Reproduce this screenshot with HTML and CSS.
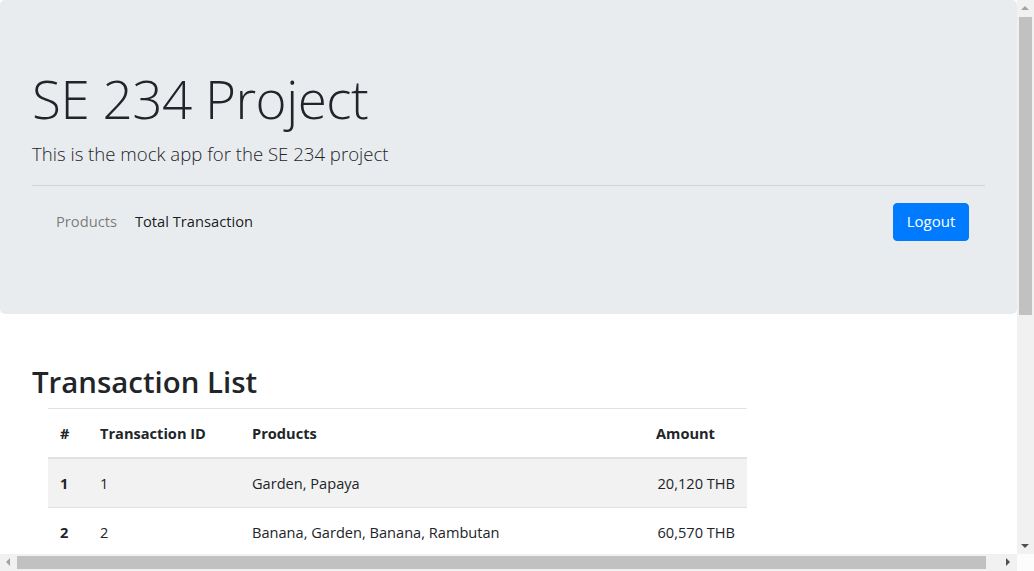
FILE: index.html
```html
<!DOCTYPE html>
<html lang="en">
<head>
<meta charset="utf-8">
<title>SE 234 Project</title>
<link rel="stylesheet" href="styles.css">
</head>
<body>
<div class="page">
  <header class="jumbotron">
    <h1 class="display">SE 234 Project</h1>
    <p class="lead">This is the mock app for the SE 234 project</p>
    <hr class="divider">
    <nav class="navbar">
      <ul class="nav-links">
        <li><a class="nav-link muted" href="#">Products</a></li>
        <li><a class="nav-link active" href="#">Total Transaction</a></li>
      </ul>
      <button class="btn-primary" type="button">Logout</button>
    </nav>
  </header>
  <main class="content">
    <h2 class="title">Transaction List</h2>
    <table class="table">
      <colgroup>
        <col class="c1"><col class="c2"><col class="c3"><col class="c4">
      </colgroup>
      <thead>
        <tr><th>#</th><th>Transaction ID</th><th>Products</th><th>Amount</th></tr>
      </thead>
      <tbody>
        <tr class="striped"><th>1</th><td>1</td><td>Garden, Papaya</td><td class="num">20,120 THB</td></tr>
        <tr><th>2</th><td>2</td><td>Banana, Garden, Banana, Rambutan</td><td class="num">60,570 THB</td></tr>
      </tbody>
    </table>
  </main>
</div>
<div class="vscroll">
  <span class="arrow up"></span>
  <span class="vthumb"></span>
  <span class="arrow down"></span>
</div>
<div class="hscroll">
  <span class="arrow left"></span>
  <span class="hthumb"></span>
  <span class="arrow right"></span>
</div>
<div class="corner"></div>
</body>
</html>
```
FILE: styles.css
```css
html, body {
  margin: 0;
  padding: 0;
  overflow: hidden;
  height: 100%;
  background: #fff;
}
body {
  font-family: "Segoe UI", "Open Sans", "Noto Sans", sans-serif;
  font-size: 16px;
  line-height: 1.5;
  color: #212529;
}
.page {
  width: 1017px;
}
.jumbotron {
  background: #e9ecef;
  border-radius: 5px;
  padding: 64px 32px 64px 32px;
  height: 186px;
}
.display {
  margin: 0 0 3px 0;
  padding-top: 3px;
  font-size: 53px;
  font-weight: 300;
  line-height: 1.2;
  letter-spacing: -0.5px;
  height: 67px;
}
.lead {
  margin: 0 0 18px 0;
  padding-top: 2px;
  font-size: 18.6px;
  font-weight: 300;
  line-height: 30px;
  height: 28px;
  color: #212529;
}
.divider {
  margin: 0;
  border: 0;
  border-top: 1px solid rgba(0,0,0,0.1);
}
.navbar {
  display: flex;
  justify-content: space-between;
  align-items: center;
  padding: 17px 16px 8px 16px;
}
.nav-links {
  display: flex;
  list-style: none;
  margin: 0;
  padding: 0;
}
.nav-link {
  display: block;
  padding: 7px 8px 9px 8px;
  text-decoration: none;
  font-size: 14.7px;
}
.nav-link.muted { color: rgba(0,0,0,0.5); margin-right: 2px; }
.nav-link.active { color: rgba(0,0,0,0.9); }
.btn-primary {
  font-family: inherit;
  font-size: 15px;
  line-height: 24px;
  color: #fff;
  background: #007bff;
  border: 1px solid #007bff;
  border-radius: 4px;
  padding: 5px 12px 7px 12px;
  width: 76px;
  height: 38px;
}
.content {
  padding: 51px 32px 0 32px;
}
.title {
  margin: 0 0 7px 0;
  font-size: 29.4px;
  font-weight: 600;
  line-height: 1.2;
  height: 36px;
}
.table {
  margin-left: 16px;
  width: 699px;
  border-collapse: collapse;
  table-layout: fixed;
  font-size: 14.6px;
}
.c1 { width: 40px; }
.c2 { width: 152px; }
.c3 { width: 404px; }
.c4 { width: 103px; }
.table th, .table td {
  padding: 12px;
  text-align: left;
  border-top: 1px solid #dee2e6;
  line-height: 24px;
  vertical-align: top;
  white-space: nowrap;
}
.table th { font-weight: 700; }
.table thead th {
  border-bottom: 2px solid #dee2e6;
}
.table tbody tr.striped { background: rgba(0,0,0,0.05); }
.table td.num { text-align: right; }

.vscroll {
  position: fixed;
  top: 0;
  right: 0;
  width: 17px;
  height: 554px;
  background: #f1f1f1;
}
.hscroll {
  position: fixed;
  left: 0;
  bottom: 0;
  width: 1017px;
  height: 17px;
  background: #f1f1f1;
}
.corner {
  position: fixed;
  right: 0;
  bottom: 0;
  width: 17px;
  height: 17px;
  background: #fcfcfc;
}
.vthumb {
  position: absolute;
  left: 2px;
  top: 17px;
  width: 13px;
  height: 298px;
  background: #c1c1c1;
}
.hthumb {
  position: absolute;
  top: 2px;
  left: 17px;
  width: 969px;
  height: 13px;
  background: #c1c1c1;
}
.arrow {
  position: absolute;
  width: 0;
  height: 0;
  border-style: solid;
}
.arrow.up {
  left: 4px;
  top: 6px;
  border-width: 0 4px 4px 4px;
  border-color: transparent transparent #a3a3a3 transparent;
}
.arrow.down {
  left: 4px;
  bottom: 6px;
  border-width: 4px 4px 0 4px;
  border-color: #505050 transparent transparent transparent;
}
.arrow.left {
  left: 6px;
  top: 4px;
  border-width: 4px 4px 4px 0;
  border-color: transparent #a3a3a3 transparent transparent;
}
.arrow.right {
  right: 7px;
  top: 4px;
  border-width: 4px 0 4px 4px;
  border-color: transparent transparent transparent #505050;
}
```
